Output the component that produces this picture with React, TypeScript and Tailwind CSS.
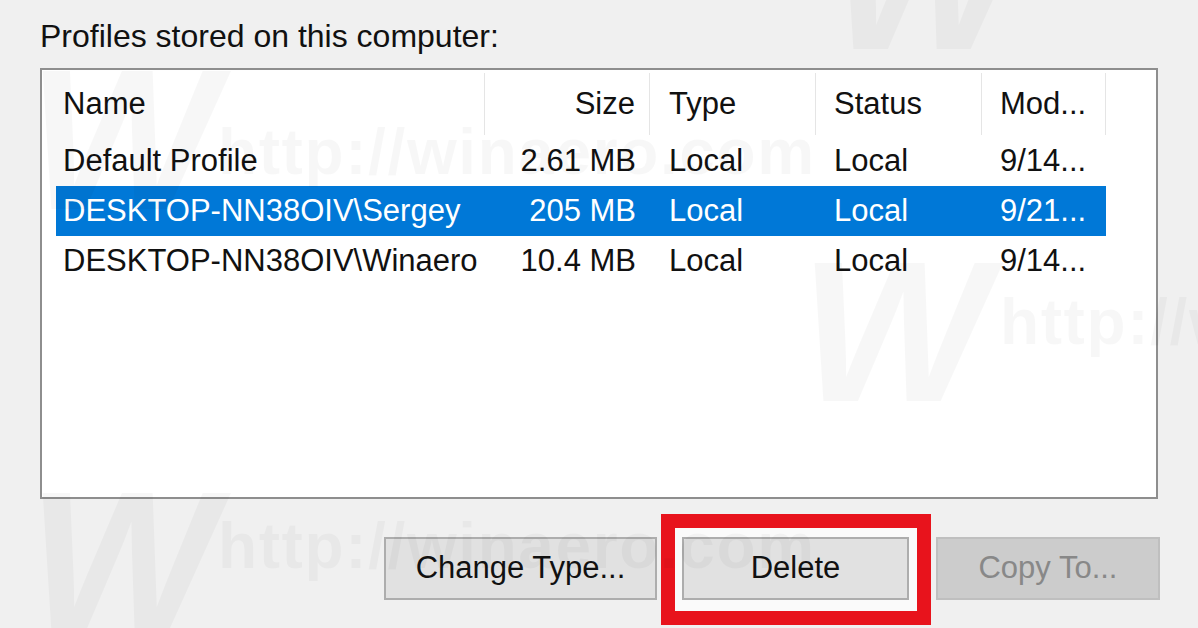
import React from 'react';

interface Profile {
  name: string;
  size: string;
  type: string;
  status: string;
  modified: string;
  selected?: boolean;
}

const profiles: Profile[] = [
  { name: 'Default Profile', size: '2.61 MB', type: 'Local', status: 'Local', modified: '9/14...' },
  { name: 'DESKTOP-NN38OIV\\Sergey', size: '205 MB', type: 'Local', status: 'Local', modified: '9/21...', selected: true },
  { name: 'DESKTOP-NN38OIV\\Winaero', size: '10.4 MB', type: 'Local', status: 'Local', modified: '9/14...' },
];

// faint winaero watermark that sits over the screenshot
const Watermark: React.FC = () => (
  <div className="absolute inset-0 pointer-events-none select-none font-bold text-black/[0.03]">
    <div className="absolute left-[28px] top-[40px] text-[200px] leading-none italic">W</div>
    <div className="absolute left-[800px] top-[232px] text-[200px] leading-none italic">W</div>
    <div className="absolute left-[28px] top-[462px] text-[200px] leading-none italic">W</div>
    <div className="absolute left-[830px] top-[-120px] text-[200px] leading-none italic">W</div>
    <div className="absolute left-[218px] top-[120px] text-[64px] leading-none tracking-wide">http://winaero.com</div>
    <div className="absolute left-[218px] top-[514px] text-[64px] leading-none tracking-wide">http://winaero.com</div>
    <div className="absolute left-[1000px] top-[290px] text-[64px] leading-none tracking-wide">http://winaero.com</div>
  </div>
);

const App: React.FC = () => {
  return (
    <div className="relative w-[1198px] h-[628px] overflow-hidden bg-[#f0f0f0] text-[#111] font-['Liberation_Sans',Arial,sans-serif] text-[31px]">
      {/* Group label */}
      <div className="pl-[40px] pt-[14px] text-[32px] leading-[44px]">Profiles stored on this computer:</div>

      {/* Profiles list view */}
      <div className="ml-[40px] mt-[10px] w-[1118px] h-[431px] border-2 border-[#8e8e8e] bg-white pl-[14px]">
        {/* Column headers */}
        <div className="flex h-[66px] pt-[3px] pb-[1px]">
          <div className="w-[429px] pl-[7px] flex items-center border-r border-[#e5e5e5]">Name</div>
          <div className="w-[165px] pr-[14px] flex items-center justify-end border-r border-[#e5e5e5]">Size</div>
          <div className="w-[166px] pl-[19px] flex items-center border-r border-[#e5e5e5]">Type</div>
          <div className="w-[166px] pl-[18px] flex items-center border-r border-[#e5e5e5]">Status</div>
          <div className="w-[124px] pl-[18px] flex items-center border-r border-[#e5e5e5]">Mod...</div>
        </div>

        {/* Rows */}
        {profiles.map((p) => (
          <div
            key={p.name}
            className={`flex w-[1050px] h-[50px] items-center whitespace-nowrap ${p.selected ? 'bg-[#0078d7] text-white' : ''}`}
          >
            <div className="w-[429px] pl-[7px]">{p.name}</div>
            <div className="w-[165px] pr-[14px] text-right">{p.size}</div>
            <div className="w-[166px] pl-[19px]">{p.type}</div>
            <div className="w-[166px] pl-[18px]">{p.status}</div>
            <div className="w-[124px] pl-[18px]">{p.modified}</div>
          </div>
        ))}
      </div>

      {/* Buttons */}
      <div className="flex items-start pl-[384px] mt-[15px]">
        <button className="mt-[23px] w-[273px] h-[63px] border-2 border-[#adadad] bg-[#e1e1e1] text-[#111]">
          Change Type...
        </button>
        <div className="ml-[4px] border-[14px] border-[#e8131c] bg-[#fafafa] pl-[7px] pr-[8px] pt-[9px] pb-[11px]">
          <button className="w-[227px] h-[63px] border-2 border-[#adadad] bg-[#e1e1e1] text-[#111]">
            Delete
          </button>
        </div>
        <button disabled className="ml-[5px] mt-[23px] w-[224px] h-[63px] border-2 border-[#bfbfbf] bg-[#cccccc] text-[#888888]">
          Copy To...
        </button>
      </div>

      <Watermark />
    </div>
  );
};

export default App;
